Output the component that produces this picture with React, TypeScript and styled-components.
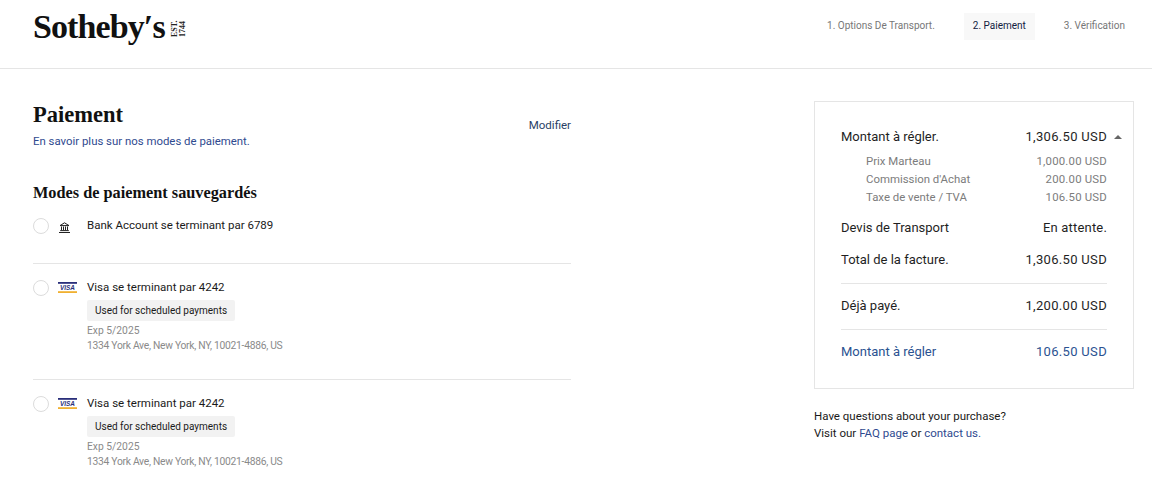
import React from "react";
import styled, { createGlobalStyle } from "styled-components";

const Global = createGlobalStyle`
  html, body { margin: 0; padding: 0; background: #fff; overflow: hidden; }
  body { font-family: Roboto, "Liberation Sans", sans-serif; color: #1a1a1a; }
`;

const SERIF = `"Liberation Serif", "DejaVu Serif", serif`;
const BLUE = "#2f4a8f";
const CARD_BLUE = "#2a5291";

const Header = styled.header`
  height: 68px;
  box-sizing: content-box;
  border-bottom: 1px solid #e5e5e5;
  display: flex;
  align-items: flex-start;
  justify-content: space-between;
  padding: 0 18px 0 33px;
`;
const Logo = styled.div`
  display: flex;
  align-items: flex-start;
  padding-top: 8px;
  gap: 6px;
`;
const LogoWord = styled.span`
  font-family: ${SERIF};
  font-weight: 700;
  font-size: 34px;
  line-height: 38px;
  letter-spacing: -0.9px;
  color: #111;
`;
const LogoEst = styled.span`
  writing-mode: vertical-rl;
  transform: rotate(180deg);
  font-family: ${SERIF};
  font-weight: 700;
  font-size: 8px;
  line-height: 8px;
  height: 22px;
  width: 16px;
  margin-top: 10px;
  text-align: center;
  color: #222;
`;
const Steps = styled.nav`
  display: flex;
  align-items: center;
  gap: 20px;
  padding-top: 13px;
`;
const Step = styled.span<{ $active?: boolean }>`
  font-size: 10px;
  line-height: 25px;
  height: 27px;
  padding: 0 9px;
  color: ${(p) => (p.$active ? "#12213f" : "#777")};
  background: ${(p) => (p.$active ? "#f8f8f8" : "transparent")};
`;

const Main = styled.main`
  display: flex;
  justify-content: space-between;
  padding: 32px 18px 0 33px;
`;
const Left = styled.section`
  width: 538px;
`;
const TitleRow = styled.div`
  display: flex;
  justify-content: space-between;
  align-items: flex-start;
`;
const Title = styled.h1`
  margin: 0;
  font-family: ${SERIF};
  font-weight: 700;
  font-size: 22.5px;
  line-height: 28px;
  color: #111;
`;
const Sub = styled.p`
  margin: 4px 0 0;
  font-size: 11.4px;
  line-height: 16px;
  color: ${BLUE};
`;
const EditLink = styled.a`
  margin-top: 17px;
  font-size: 11.5px;
  line-height: 14px;
  color: #2a3f66;
`;
const SectionTitle = styled.h2`
  margin: 33px 0 0;
  font-family: ${SERIF};
  font-weight: 700;
  font-size: 16.3px;
  line-height: 22px;
  color: #111;
`;
const MethodRow = styled.div<{ $first?: boolean; $last?: boolean }>`
  display: grid;
  grid-template-columns: 25px 29px 1fr;
  padding: ${(p) => (p.$first ? "13px 0 29px" : "15px 0 26px")};
  border-bottom: ${(p) => (p.$last ? "none" : "1px solid #e5e5e5")};
`;
const Radio = styled.span`
  box-sizing: border-box;
  width: 16px;
  height: 16px;
  border: 1px solid #dcdcdc;
  border-radius: 50%;
  margin-top: 1px;
`;
const IconCell = styled.span`
  display: flex;
  justify-content: flex-start;
  align-items: flex-start;
`;
const MethodBody = styled.div`
  display: flex;
  flex-direction: column;
  align-items: flex-start;
`;
const MethodName = styled.span`
  font-size: 11.5px;
  line-height: 16px;
  color: #1a1a1a;
`;
const Badge = styled.span`
  margin-top: 5px;
  background: #f2f2f2;
  border-radius: 2px;
  font-size: 10px;
  line-height: 21px;
  padding: 0 8px;
  color: #1a1a1a;
`;
const Meta = styled.span<{ $gap?: boolean; $tight?: boolean }>`
  font-size: 10.3px;
  line-height: 15px;
  color: #8a8a8a;
  margin-top: ${(p) => (p.$gap ? "2px" : "0")};
  letter-spacing: ${(p) => (p.$tight ? "-0.28px" : "0")};
`;

const Right = styled.aside`
  width: 320px;
`;
const Card = styled.div`
  box-sizing: border-box;
  width: 320px;
  height: 288px;
  border: 1px solid #e5e5e5;
  padding: 25px 26px 0 26px;
`;
const Row = styled.div<{ $top?: number; $blue?: boolean }>`
  display: flex;
  justify-content: space-between;
  position: relative;
  font-size: 13px;
  line-height: 20px;
  margin-top: ${(p) => p.$top ?? 0}px;
  color: ${(p) => (p.$blue ? CARD_BLUE : "#1f1f1f")};
`;
const Amount = styled.span`
  letter-spacing: 0.32px;
`;
const Status = styled.span`
  letter-spacing: 0.18px;
`;
const SubRow = styled.div`
  display: flex;
  justify-content: space-between;
  padding-left: 25px;
  font-size: 11.4px;
  line-height: 18px;
  color: #7c7c7c;
`;
const SubAmount = styled.span`
  letter-spacing: 0.2px;
`;
const SubRows = styled.div`
  margin-top: 5px;
`;
const Sep = styled.hr<{ $top: number }>`
  border: 0;
  border-top: 1px solid #e5e5e5;
  margin: ${(p) => p.$top}px 0 0;
`;
const Caret = styled.span`
  position: absolute;
  right: -15px;
  top: 8px;
  width: 0;
  height: 0;
  border-left: 4.5px solid transparent;
  border-right: 4.5px solid transparent;
  border-bottom: 4.5px solid #666;
`;
const Help = styled.p`
  margin: 19px 0 0;
  font-size: 11.5px;
  line-height: 17px;
  color: #1a1a1a;
`;
const HelpLink = styled.a`
  color: ${BLUE};
`;
const BankSvg = styled.svg`
  margin: 5px 0 0 1px;
`;
const VisaSvg = styled.svg`
  margin-top: 3px;
`;

const BankIcon = () => (
  <BankSvg width="11" height="11" viewBox="0 0 11 11" fill="none" stroke="#222" strokeWidth="1">
    <path d="M1 3.6 5.5.8l4.5 2.8z" />
    <path d="M2.5 4.5v3.6M4.5 4.5v3.6M6.5 4.5v3.6M8.5 4.5v3.6" />
    <path d="M1.2 8.6h8.6M0 10.5h11" />
  </BankSvg>
);

const VisaIcon = () => (
  <VisaSvg width="19" height="11" viewBox="0 0 19 11">
    <rect x="0" y="0" width="19" height="1.8" fill="#2a2f7a" />
    <rect x="0" y="9.2" width="19" height="1.8" fill="#f0b030" />
    <text x="9.5" y="7.8" textAnchor="middle" fontFamily='"Liberation Sans", sans-serif' fontStyle="italic" fontWeight="700" fontSize="6.4" fill="#2a2f7a">VISA</text>
  </VisaSvg>
);

const VisaMethod = ({ last }: { last?: boolean }) => (
  <MethodRow $last={last}>
    <Radio />
    <IconCell><VisaIcon /></IconCell>
    <MethodBody>
      <MethodName>Visa se terminant par 4242</MethodName>
      <Badge>Used for scheduled payments</Badge>
      <Meta $gap>Exp 5/2025</Meta>
      <Meta $tight>1334 York Ave, New York, NY, 10021-4886, US</Meta>
    </MethodBody>
  </MethodRow>
);

export default function App() {
  return (
    <>
      <Global />
      <Header>
        <Logo>
          <LogoWord>Sotheby′s</LogoWord>
          <LogoEst>EST.<br />1744</LogoEst>
        </Logo>
        <Steps>
          <Step>1. Options De Transport.</Step>
          <Step $active>2. Paiement</Step>
          <Step>3. Vérification</Step>
        </Steps>
      </Header>
      <Main>
        <Left>
          <TitleRow>
            <div>
              <Title>Paiement</Title>
              <Sub>En savoir plus sur nos modes de paiement.</Sub>
            </div>
            <EditLink>Modifier</EditLink>
          </TitleRow>
          <SectionTitle>Modes de paiement sauvegardés</SectionTitle>
          <MethodRow $first>
            <Radio />
            <IconCell><BankIcon /></IconCell>
            <MethodBody>
              <MethodName>Bank Account se terminant par 6789</MethodName>
            </MethodBody>
          </MethodRow>
          <VisaMethod />
          <VisaMethod last />
        </Left>
        <Right>
          <Card>
            <Row>
              <span>Montant à régler.</span>
              <Amount>1,306.50 USD<Caret /></Amount>
            </Row>
            <SubRows>
              <SubRow><span>Prix Marteau</span><SubAmount>1,000.00 USD</SubAmount></SubRow>
              <SubRow><span>Commission d'Achat</span><SubAmount>200.00 USD</SubAmount></SubRow>
              <SubRow><span>Taxe de vente / TVA</span><SubAmount>106.50 USD</SubAmount></SubRow>
            </SubRows>
            <Row $top={12}><span>Devis de Transport</span><Status>En attente.</Status></Row>
            <Row $top={12}><span>Total de la facture.</span><Amount>1,306.50 USD</Amount></Row>
            <Sep $top={13} />
            <Row $top={12}><span>Déjà payé.</span><Amount>1,200.00 USD</Amount></Row>
            <Sep $top={13} />
            <Row $top={12} $blue><span>Montant à régler</span><Amount>106.50 USD</Amount></Row>
          </Card>
          <Help>
            Have questions about your purchase?<br />
            Visit our <HelpLink>FAQ page</HelpLink> or <HelpLink>contact us.</HelpLink>
          </Help>
        </Right>
      </Main>
    </>
  );
}
